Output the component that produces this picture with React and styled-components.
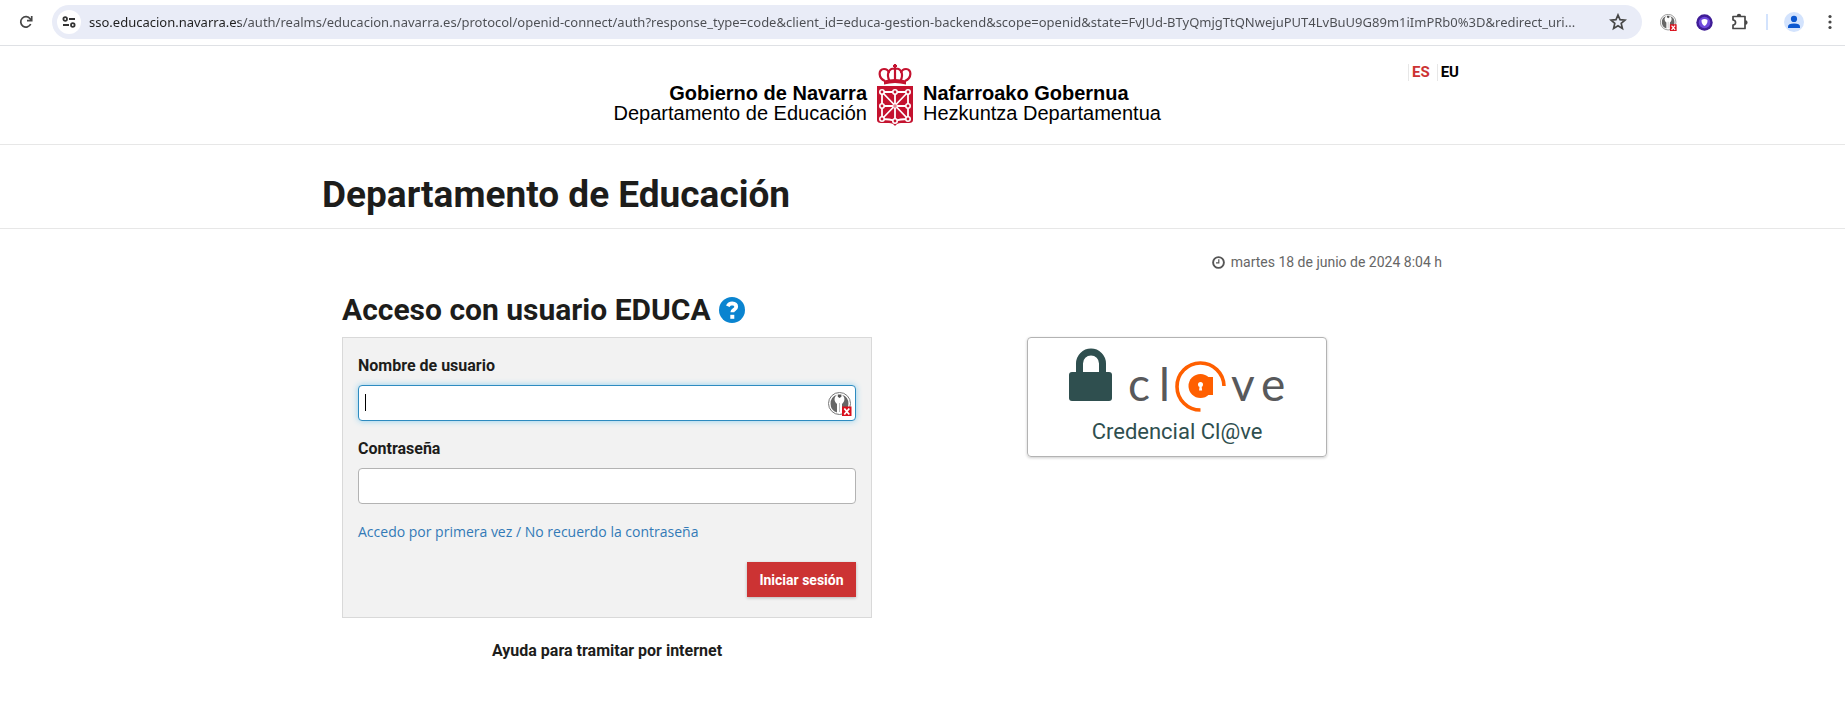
import React from "react";
import styled, { createGlobalStyle } from "styled-components";

const GlobalStyle = createGlobalStyle`
  *, *::before, *::after { box-sizing: border-box; }
  body {
    margin: 0;
    background: #fff;
    color: #1d1d1b;
    font-family: Roboto, "Liberation Sans", sans-serif;
    font-size: 16px;
    line-height: 20px;
  }
`;

/* Browser bar */
const BrowserBar = styled.div`
  display: flex;
  align-items: center;
  height: 46px;
  padding: 0 5px 1px 16px;
  border-bottom: 1px solid #dfe1e5;
`;

const IconButton = styled.button`
  display: grid;
  place-items: center;
  flex: none;
  width: ${({ $width = 20 }) => $width}px;
  height: 24px;
  padding: 0;
  border: 0;
  background: none;
  color: #474747;
`;

const AddressBar = styled.div`
  display: flex;
  align-items: center;
  flex: 1;
  min-width: 0;
  height: 34px;
  margin: 0 16px;
  padding: 0 14px 0 5px;
  border-radius: 17px;
  background: #e9ecf7;
`;

const SiteInfo = styled(IconButton)`
  height: 24px;
  border-radius: 12px;
  background: #fff;
`;

const UrlInput = styled.input`
  flex: 1;
  min-width: 0;
  height: 24px;
  margin: 0 4px 0 8px;
  padding: 0;
  border: 0;
  outline: 0;
  background: linear-gradient(90deg, #1f1f1f 150px, #4b4d52 150px);
  background-clip: text;
  color: transparent;
  font: 13px/24px "Noto Sans", sans-serif;
`;

const Extensions = styled.div`
  display: flex;
  align-items: center;
  gap: 16px;
`;

const Divider = styled.span`
  width: 2px;
  height: 16px;
  background: #d3e3fd;
`;

/* Site chrome */
const Site = styled.div`
  min-width: 0;
`;

const Band = styled.div`
  padding-right: 61px;
  border-bottom: ${({ $line }) => ($line ? "1px solid #e7e7e7" : "0")};
`;

const Container = styled.div`
  position: relative;
  max-width: 1140px;
  margin: 0 auto;
  padding: ${({ $pad = "0" }) => $pad};
`;

const Brand = styled.a`
  display: grid;
  grid-template-columns: 1fr 36px 1fr;
  column-gap: 10px;
  align-items: start;
  width: 608px;
  max-width: 100%;
  margin: 0 auto;
  padding: 18px 0 18px 6px;
  color: #000;
  text-decoration: none;
  font: 20px/20px "Liberation Sans", Arial, sans-serif;
`;

const BrandText = styled.span`
  display: flex;
  flex-direction: column;
  padding-top: 19px;
  text-align: ${({ $align }) => $align};
  white-space: nowrap;
`;

const Languages = styled.nav`
  position: absolute;
  top: 18px;
  right: 0;
  display: flex;
`;

const Language = styled.a`
  padding: 0 3px;
  margin-left: 4px;
  border-left: 1px solid #e7e7e7;
  color: ${({ $active }) => ($active ? "#c33" : "#000")};
  font-size: 15px;
  line-height: 17px;
  font-weight: 700;
  text-decoration: none;
`;

const PageTitle = styled.h1`
  margin: 0;
  padding: 30px 0 13px;
  font-size: 37px;
  line-height: 40px;
  font-weight: 700;
`;

const DateLine = styled.p`
  display: flex;
  justify-content: flex-end;
  align-items: center;
  gap: 6px;
  margin: 0;
  color: #666;
  font-size: 14px;
  line-height: 20px;
`;

const Columns = styled.main`
  display: grid;
  grid-template-columns: 1fr 1fr;
  gap: 40px;
`;

const SectionTitle = styled.h2`
  display: flex;
  align-items: center;
  gap: 8px;
  margin: 20px 0 9px;
  font-size: 30px;
  line-height: 36px;
  font-weight: 700;
`;

const HelpButton = styled(IconButton)`
  height: 26px;
`;

const LoginForm = styled.form`
  padding: 18px 15px 20px;
  border: 1px solid #d9d9d9;
  background: #f2f2f2;
`;

const Field = styled.div`
  position: relative;
  margin-bottom: 18px;
`;

const Label = styled.label`
  display: block;
  margin-bottom: 9px;
  font-weight: 700;
`;

const TextInput = styled.input`
  display: block;
  width: 100%;
  height: 36px;
  padding: 6px;
  border: 1px solid ${({ $current }) => ($current ? "#2e8bc0" : "#b3b3b3")};
  border-radius: 4px;
  outline: 0;
  background: #fff;
  box-shadow: ${({ $current }) => ($current ? "0 0 6px #8fd0ee" : "none")};
  font: 16px/20px Roboto, sans-serif;
`;

const Caret = styled.span`
  position: absolute;
  left: 7px;
  bottom: 10px;
  width: 1px;
  height: 17px;
  background: #000;
`;

const FieldBadge = styled.span`
  position: absolute;
  right: 4px;
  bottom: 5px;
  display: flex;
`;

const RecoverLink = styled.a`
  color: #337ab7;
  font: 14px/20px "Open Sans", sans-serif;
  text-decoration: none;
`;

const Actions = styled.div`
  display: flex;
  justify-content: flex-end;
  margin-top: 20px;
`;

const SubmitButton = styled.button`
  min-width: 109px;
  height: 35px;
  padding: 0 12px;
  border: 0;
  background: #c33;
  box-shadow: 0 1px 3px rgba(0, 0, 0, 0.25);
  color: #fff;
  font: 700 14px/20px Roboto, sans-serif;
`;

const HelpText = styled.a`
  display: block;
  margin-top: 23px;
  color: inherit;
  font-weight: 700;
  text-align: center;
  text-decoration: none;
`;

const ClaveCard = styled.a`
  display: flex;
  flex-direction: column;
  align-items: center;
  gap: 4px;
  width: 300px;
  height: 120px;
  margin: 65px auto 0;
  padding-top: 10px;
  border: 1px solid #b3b3b3;
  border-radius: 4px;
  box-shadow: 0 1px 3px rgba(0, 0, 0, 0.2);
  color: #2f4f4f;
  font-size: 22px;
  line-height: 28px;
  text-decoration: none;
`;

const ReloadIcon = () => (
  <svg width="14" height="14" viewBox="0 0 14 14" fill="none" stroke="currentColor" strokeWidth="1.7">
    <path d="M11.7 9A5.2 5.2 0 1 1 11.2 3.9L12.2 5" />
    <path d="M12.7 1V5.6H8" />
  </svg>
);

const TuneIcon = () => (
  <svg width="14" height="12" viewBox="0 0 14 12" fill="none" stroke="#333" strokeWidth="1.8">
    <circle cx="3.2" cy="3" r="1.8" />
    <path d="M7 3h6M1 9h6" />
    <circle cx="10.8" cy="9" r="1.8" />
  </svg>
);

const StarIcon = () => (
  <svg width="18" height="18" viewBox="0 0 18 18" fill="none" stroke="currentColor" strokeWidth="1.7">
    <path d="M9 2l2 4.7 5 .4-3.8 3.3 1.2 5L9 12.7l-4.4 2.7 1.2-5L2 7.100l5-.4z" />
  </svg>
);

const KeyBadge = ({ size }) => (
  <svg width={size} height={size} viewBox="0 0 24 24">
    <circle cx="11.500" cy="11.500" r="11" fill="#fff" stroke="#777" />
    <path d="M9 2.800A9.300 9.300 0 0 0 9 20.500V12C5.500 9 6 5 9 2.800zM14 2.800A9.300 9.300 0 0 1 14 20.500V12C17.500 9 17 5 14 2.800z" fill="#666" />
    <path d="M9.800 2.500h3.600v2.200l-1.800 1.200-1.800-1.200z" fill="#555" />
    <path d="M11.500 11v9" stroke="#bbb" />
    <path d="M14 14.500h9.500v9.500H14z" fill="#d9101c" />
    <path d="M16.300 16.500l5 6M21.300 16.500l-5 6" stroke="#fff" strokeWidth="1.800" />
  </svg>
);

const ShieldExtIcon = () => (
  <svg width="17" height="17" viewBox="0 0 17 17">
    <circle cx="8.500" cy="8.500" r="8.200" fill="#3f1d96" />
    <circle cx="8.500" cy="8.500" r="5.800" fill="#6e48dc" />
    <path d="M5.500 6q3-1.800 6 0 .3 4-3 6-3.300-2-3-6z" fill="#fff" />
  </svg>
);

const PuzzleIcon = () => (
  <svg width="18" height="18" viewBox="0 0 18 18" fill="none" stroke="currentColor" strokeWidth="1.700">
    <path d="M2 3.500h12V15.500H2V12c3.400-.4 3.400-4.600 0-5z" strokeLinejoin="round" />
    <path d="M5.800 3.500V3a2.200 2.200 0 0 1 4.400 0v.5zM14 7.300h.4a2.200 2.200 0 0 1 0 4.400H14z" fill="currentColor" stroke="none" />
  </svg>
);

const AvatarIcon = () => (
  <svg width="20" height="20" viewBox="0 0 20 20">
    <circle cx="10" cy="10" r="10" fill="#d3e3fd" />
    <circle cx="10" cy="6.900" r="3.100" fill="#0b57d0" />
    <path d="M4 16v-1.500q0-3 6-3t6 3V16z" fill="#0b57d0" />
  </svg>
);

const DotsIcon = () => (
  <svg width="4" height="16" viewBox="0 0 4 16" fill="#474747">
    <circle cx="2" cy="2.500" r="1.600" />
    <circle cx="2" cy="8" r="1.600" />
    <circle cx="2" cy="13.500" r="1.600" />
  </svg>
);

const shieldNodes = [
  [5, 28], [18, 28], [31, 28],
  [5, 42], [31, 42],
  [5, 55], [18, 57], [31, 55],
];

const Emblem = () => (
  <svg width="36" height="62" viewBox="0 0 36 62">
    <g fill="none" stroke="#c4122f" strokeWidth="2.200">
      <path d="M8 17C1 14 1 5 7 5q4 0 5 4M28 17c7-3 7-12 1-12q-4 0-5 4" />
      <path d="M12.500 17C9 10 12 4.500 17 4.500M23.500 17C27 10 24 4.500 19 4.500M18 0v17M16 2h4" />
    </g>
    <path d="M7 16.500q11-3 22 0V20.500q-11-3-22 0z" fill="#c4122f" />
    <path d="M0 22h36v34q0 3-4 3h-8q-4 0-6 3-2-3-6-3H4q-4 0-4-3z" fill="#c4122f" />
    <path d="M5 28h26v27q-8 0-13 2-5-2-13-2zM5 28l26 27M31 28L5 55M18 28v29M5 42h26" fill="none" stroke="#fff" strokeWidth="1.800" />
    {shieldNodes.map(([x, y]) => (
      <circle key={`${x}-${y}`} cx={x} cy={y} r="2.200" fill="#c4122f" stroke="#fff" strokeWidth="1.600" />
    ))}
    <circle cx="18" cy="42" r="2.300" fill="#e9808f" stroke="#fff" />
  </svg>
);

const ClockIcon = () => (
  <svg width="13" height="13" viewBox="0 0 13 13" fill="none" stroke="#555">
    <circle cx="6.500" cy="6.500" r="5.400" strokeWidth="1.900" />
    <path d="M6.800 3.200v3.700H4" strokeWidth="1.200" />
  </svg>
);

const QuestionIcon = () => (
  <svg width="26" height="26" viewBox="0 0 26 26">
    <circle cx="13" cy="13" r="13" fill="#0a84d0" />
    <path d="M8.800 9.200Q10 6.300 13.200 6.300q4 .2 4 3.400 0 1.700-2 2.900-1.900 1.100-1.900 2.700" fill="none" stroke="#fff" strokeWidth="3.800" />
    <path d="M11.300 17.800h4v4h-4z" fill="#fff" />
  </svg>
);

const ClaveLogo = () => (
  <svg width="216" height="66" viewBox="0 0 216 66">
    <path d="M10.500 25V15.500a11.500 11.500 0 0 1 23 0V25" fill="none" stroke="#2f4f4f" strokeWidth="7" />
    <rect x="0" y="24" width="43" height="29" rx="3" fill="#2f4f4f" />
    <g fill="#58595b" fontFamily="Lato, sans-serif" fontSize="46">
      <text x="59" y="53">c</text>
      <text x="90" y="53">l</text>
      <text x="162" y="53">v</text>
      <text x="192" y="53">e</text>
    </g>
    <path d="M155 38A23.500 23.500 0 1 0 131.500 62" fill="none" stroke="#ff5f00" strokeWidth="3.600" />
    <circle cx="131.500" cy="38" r="12" fill="#ff5f00" />
    <path d="M139 29h5v18h-6z" fill="#ff5f00" />
    <circle cx="131.500" cy="36.500" r="2.500" fill="#fff" />
    <path d="M130.700 37h1.800l.6 5.500h-3z" fill="#fff" />
  </svg>
);

const url =
  "sso.educacion.navarra.es/auth/realms/educacion.navarra.es/protocol/openid-connect/auth?response_type=code&client_id=educa-gestion-backend&scope=openid&state=FvJUd-BTyQmjgTtQNwejuPUT4LvBuU9G89m1iImPRb0%3D&redirect_uri...";

export default function App() {
  return (
    <>
      <GlobalStyle />
      <BrowserBar>
        <IconButton aria-label="Recargar"><ReloadIcon /></IconButton>
        <AddressBar>
          <SiteInfo $width={24} aria-label="Información del sitio"><TuneIcon /></SiteInfo>
          <UrlInput aria-label="Dirección" defaultValue={url} />
          <IconButton aria-label="Favorito"><StarIcon /></IconButton>
        </AddressBar>
        <Extensions>
          <IconButton aria-label="Gestor de claves"><KeyBadge size={17} /></IconButton>
          <IconButton aria-label="Protección"><ShieldExtIcon /></IconButton>
          <IconButton aria-label="Extensiones"><PuzzleIcon /></IconButton>
          <Divider />
          <IconButton aria-label="Perfil"><AvatarIcon /></IconButton>
          <IconButton aria-label="Menú"><DotsIcon /></IconButton>
        </Extensions>
      </BrowserBar>
      <Site>
        <Band as="header" $line>
          <Container>
            <Brand href="#">
              <BrandText $align="right">
                <b>Gobierno de Navarra</b>
                <span>Departamento de Educación</span>
              </BrandText>
              <Emblem />
              <BrandText $align="left">
                <b>Nafarroako Gobernua</b>
                <span>Hezkuntza Departamentua</span>
              </BrandText>
            </Brand>
            <Languages>
              <Language href="#es" $active>ES</Language>
              <Language href="#eu">EU</Language>
            </Languages>
          </Container>
        </Band>
        <Band $line>
          <Container>
            <PageTitle>Departamento de Educación</PageTitle>
          </Container>
        </Band>
        <Band>
          <Container $pad="23px 20px 32px">
            <DateLine><ClockIcon />martes 18 de junio de 2024 8:04 h</DateLine>
            <Columns>
              <section>
                <SectionTitle>
                  Acceso con usuario EDUCA
                  <HelpButton $width={26} aria-label="Ayuda"><QuestionIcon /></HelpButton>
                </SectionTitle>
                <LoginForm>
                  <Field>
                    <Label htmlFor="username">Nombre de usuario</Label>
                    <TextInput id="username" type="text" $current />
                    <Caret />
                    <FieldBadge><KeyBadge size={24} /></FieldBadge>
                  </Field>
                  <Field>
                    <Label htmlFor="password">Contraseña</Label>
                    <TextInput id="password" type="password" />
                  </Field>
                  <RecoverLink href="#recuperar">Accedo por primera vez / No recuerdo la contraseña</RecoverLink>
                  <Actions>
                    <SubmitButton type="submit">Iniciar sesión</SubmitButton>
                  </Actions>
                </LoginForm>
                <HelpText href="#ayuda">Ayuda para tramitar por internet</HelpText>
              </section>
              <section>
                <ClaveCard href="#clave">
                  <ClaveLogo />
                  Credencial Cl@ve
                </ClaveCard>
              </section>
            </Columns>
          </Container>
        </Band>
      </Site>
    </>
  );
}
